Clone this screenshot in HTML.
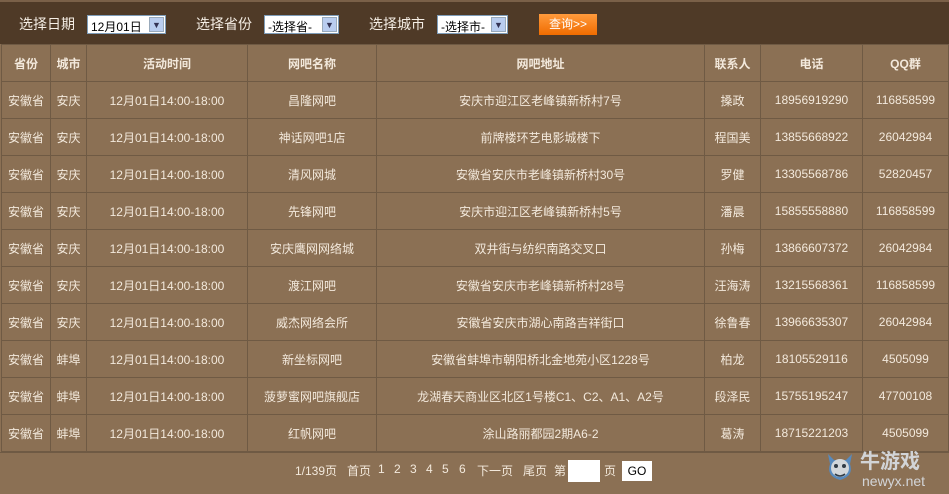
<!DOCTYPE html>
<html><head><meta charset="utf-8"><style>
*{margin:0;padding:0;box-sizing:border-box}
body{width:949px;height:491px;overflow:hidden;background:#8b7054;font-family:"Liberation Sans","Noto Sans CJK SC",sans-serif;font-size:12px;color:#f3e9dc;position:relative}
.bar{height:44px;background:#4f3a27;border-top:2px solid #7a6048;position:relative;font-size:14px;color:#f5eee5}
.bar span{position:absolute;top:12px}
.sel{position:absolute;top:13px;height:19px;background:#fff;border:1px solid #7f9db9;color:#000;font-size:12px;padding:2px 0 0 3px}
.sel i{position:absolute;right:1px;top:1px;width:15px;height:15px;background:#b9cdf0;border:1px solid #9ab;font-style:normal;font-size:9px;color:#335;text-align:center;line-height:14px}
.btn{position:absolute;left:539px;top:12px;width:58px;height:21px;background:linear-gradient(#ff9a3c,#f06c00);color:#fff;font-size:12px;text-align:center;line-height:21px}
table{border-collapse:collapse;position:absolute;left:1px;top:44px;width:947px;table-layout:fixed}
td,th{border:1px solid #6f5a44;text-align:center;height:37px;font-size:12px;white-space:nowrap}
th{font-weight:bold;height:37px}
.pg{position:absolute;top:452px;left:0;width:949px;height:39px;border-top:1px solid #6f5a44}
.pg span{position:absolute;top:9px}
.in{position:absolute;left:568px;top:7px;width:32px;height:22px;background:#fff}
.go{position:absolute;left:622px;top:8px;width:30px;height:20px;background:#fff;color:#000;text-align:center;line-height:20px;font-size:12px}
.logo{position:absolute;left:826px;top:446px;opacity:.85}
</style></head><body>
<div class="bar">
<span style="left:19px">选择日期</span>
<div class="sel" style="left:87px;width:79px">12月01日<i>▼</i></div>
<span style="left:196px">选择省份</span>
<div class="sel" style="left:264px;width:75px">-选择省-<i>▼</i></div>
<span style="left:369px">选择城市</span>
<div class="sel" style="left:437px;width:71px">-选择市-<i>▼</i></div>
<div class="btn">查询&gt;&gt;</div>
</div>
<table>
<colgroup><col style="width:49px"><col style="width:36px"><col style="width:161px"><col style="width:129px"><col style="width:328px"><col style="width:56px"><col style="width:102px"><col style="width:86px"></colgroup>
<tr><th>省份</th><th>城市</th><th>活动时间</th><th>网吧名称</th><th>网吧地址</th><th>联系人</th><th>电话</th><th>QQ群</th></tr>
<tr><td>安徽省</td><td>安庆</td><td>12月01日14:00-18:00</td><td>昌隆网吧</td><td>安庆市迎江区老峰镇新桥村7号</td><td>搡政</td><td>18956919290</td><td>116858599</td></tr>
<tr><td>安徽省</td><td>安庆</td><td>12月01日14:00-18:00</td><td>神话网吧1店</td><td>前牌楼环艺电影城楼下</td><td>程国美</td><td>13855668922</td><td>26042984</td></tr>
<tr><td>安徽省</td><td>安庆</td><td>12月01日14:00-18:00</td><td>清风网城</td><td>安徽省安庆市老峰镇新桥村30号</td><td>罗健</td><td>13305568786</td><td>52820457</td></tr>
<tr><td>安徽省</td><td>安庆</td><td>12月01日14:00-18:00</td><td>先锋网吧</td><td>安庆市迎江区老峰镇新桥村5号</td><td>潘晨</td><td>15855558880</td><td>116858599</td></tr>
<tr><td>安徽省</td><td>安庆</td><td>12月01日14:00-18:00</td><td>安庆鹰网网络城</td><td>双井街与纺织南路交叉口</td><td>孙梅</td><td>13866607372</td><td>26042984</td></tr>
<tr><td>安徽省</td><td>安庆</td><td>12月01日14:00-18:00</td><td>渡江网吧</td><td>安徽省安庆市老峰镇新桥村28号</td><td>汪海涛</td><td>13215568361</td><td>116858599</td></tr>
<tr><td>安徽省</td><td>安庆</td><td>12月01日14:00-18:00</td><td>威杰网络会所</td><td>安徽省安庆市湖心南路吉祥街口</td><td>徐鲁春</td><td>13966635307</td><td>26042984</td></tr>
<tr><td>安徽省</td><td>蚌埠</td><td>12月01日14:00-18:00</td><td>新坐标网吧</td><td>安徽省蚌埠市朝阳桥北金地苑小区1228号</td><td>柏龙</td><td>18105529116</td><td>4505099</td></tr>
<tr><td>安徽省</td><td>蚌埠</td><td>12月01日14:00-18:00</td><td>菠萝蜜网吧旗舰店</td><td>龙湖春天商业区北区1号楼C1、C2、A1、A2号</td><td>段泽民</td><td>15755195247</td><td>47700108</td></tr>
<tr><td>安徽省</td><td>蚌埠</td><td>12月01日14:00-18:00</td><td>红帆网吧</td><td>涂山路丽都园2期A6-2</td><td>葛涛</td><td>18715221203</td><td>4505099</td></tr>
</table>
<div class="pg">
<span style="left:295px">1/139页</span>
<span style="left:347px">首页</span>
<span style="left:378px">1</span><span style="left:394px">2</span><span style="left:410px">3</span><span style="left:426px">4</span><span style="left:442px">5</span><span style="left:459px">6</span>
<span style="left:477px">下一页</span>
<span style="left:523px">尾页</span>
<span style="left:554px">第</span>
<div class="in"></div><span style="left:604px">页</span><div class="go">GO</div>
</div>
<div class="logo">
<svg width="120" height="45" viewBox="0 0 120 45">
<path d="M2 8 L8 14 L20 14 L26 8 L24 18 Q28 30 14 34 Q0 30 4 18 Z" fill="#4f8fd1"/>
<circle cx="14" cy="22" r="9" fill="#dfe9f3"/>
<circle cx="10" cy="20" r="2" fill="#234"/><circle cx="18" cy="20" r="2" fill="#234"/>
<path d="M9 28 Q14 32 19 28" stroke="#234" fill="none" stroke-width="1.5"/>
<text x="34" y="22" font-family="Noto Sans CJK SC,sans-serif" font-size="20" font-weight="bold" fill="#dfe6ee">牛游戏</text>
<text x="36" y="40" font-family="Liberation Sans,sans-serif" font-size="14" fill="#dfe6ee">newyx.net</text>
</svg></div>
</body></html>
